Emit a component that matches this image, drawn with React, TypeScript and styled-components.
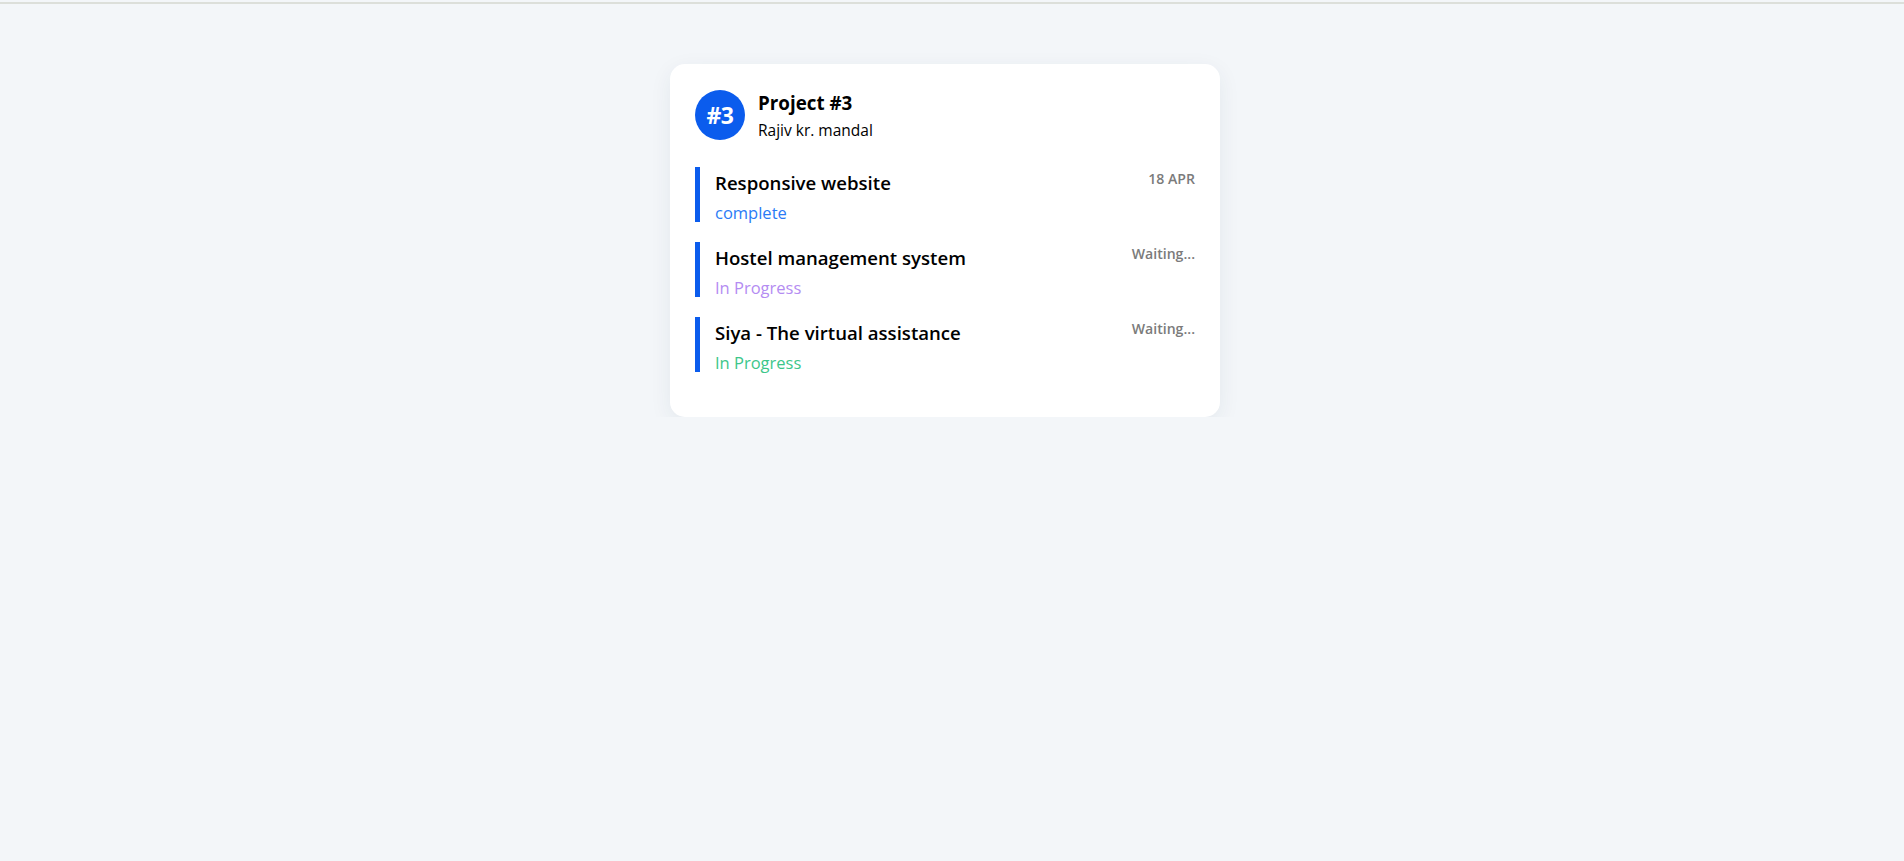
import React from "react";
import styled, { createGlobalStyle } from "styled-components";

const GlobalStyle = createGlobalStyle`
  html, body {
    margin: 0;
    padding: 0;
    background: #f3f6f9;
    font-family: "Open Sans", "Noto Sans", sans-serif;
    color: #000;
  }
  * { box-sizing: border-box; }
`;

const TopRule = styled.div`
  height: 2px;
  margin-top: 2px;
  background: #dcdfda;
`;

const Page = styled.main`
  display: flex;
  justify-content: center;
  padding: 60px 14px 0 0;
`;

const Card = styled.section`
  width: 550px;
  background: #ffffff;
  border-radius: 15px;
  padding: 26px 25px 45px 25px;
  box-shadow: 0 6px 22px rgba(30, 50, 80, 0.07);
`;

const Header = styled.header`
  display: flex;
  align-items: flex-start;
  gap: 13px;
  height: 50px;
  margin-bottom: 27px;
`;

const Badge = styled.div`
  width: 50px;
  height: 50px;
  border-radius: 50%;
  background: #0b5ced;
  color: #fff;
  display: flex;
  align-items: center;
  justify-content: center;
  font-weight: 700;
  font-size: 23px;
  letter-spacing: -0.5px;
  flex-shrink: 0;
`;

const HeaderText = styled.div`
  display: flex;
  flex-direction: column;
`;

const ProjectTitle = styled.h2`
  margin: 1px 0 0 0;
  font-size: 18.8px;
  line-height: 24px;
  font-weight: 700;
`;

const Owner = styled.p`
  margin: 6px 0 0 0;
  font-size: 15.5px;
  line-height: 19px;
  font-weight: 400;
`;

const TaskList = styled.ul`
  list-style: none;
  margin: 0;
  padding: 0;
  display: flex;
  flex-direction: column;
  gap: 20px;
`;

const Task = styled.li`
  height: 55px;
  border-left: 5px solid #0b5ced;
  padding: 3px 0 0 15px;
  display: flex;
  justify-content: space-between;
  align-items: flex-start;
`;

const TaskBody = styled.div`
  display: flex;
  flex-direction: column;
`;

const TaskTitle = styled.h3`
  margin: 0;
  font-size: 18.6px;
  line-height: 26px;
  font-weight: 600;
`;

const Status = styled.span<{ $color: string }>`
  margin-top: 7px;
  font-size: 16.5px;
  line-height: 19px;
  color: ${(p) => p.$color};
`;

const When = styled.span`
  margin-top: 0;
  font-size: 14.1px;
  line-height: 18px;
  font-weight: 600;
  color: #7b7b7b;
`;

const tasks = [
  { title: "Responsive website", status: "complete", color: "#2a7bf6", when: "18 APR" },
  { title: "Hostel management system", status: "In Progress", color: "#b48cf2", when: "Waiting..." },
  { title: "Siya - The virtual assistance", status: "In Progress", color: "#3cc68a", when: "Waiting..." },
];

export default function App() {
  return (
    <>
      <GlobalStyle />
      <TopRule />
      <Page>
        <Card>
          <Header>
            <Badge>#3</Badge>
            <HeaderText>
              <ProjectTitle>Project #3</ProjectTitle>
              <Owner>Rajiv kr. mandal</Owner>
            </HeaderText>
          </Header>
          <TaskList>
            {tasks.map((t) => (
              <Task key={t.title}>
                <TaskBody>
                  <TaskTitle>{t.title}</TaskTitle>
                  <Status $color={t.color}>{t.status}</Status>
                </TaskBody>
                <When>{t.when}</When>
              </Task>
            ))}
          </TaskList>
        </Card>
      </Page>
    </>
  );
}
